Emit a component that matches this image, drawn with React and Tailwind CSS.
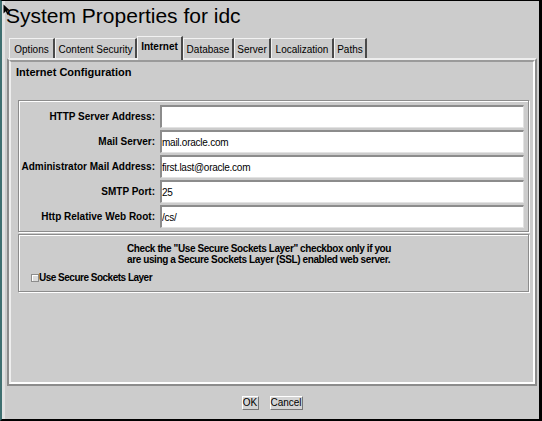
const tabs = [
  { label: 'Options', w: 'w-[46px]' },
  { label: 'Content Security', w: 'w-[82px]' },
  { label: 'Internet', w: 'w-[46px]', active: true },
  { label: 'Database', w: 'w-[51px]' },
  { label: 'Server', w: 'w-[37px]' },
  { label: 'Localization', w: 'w-[63px]' },
  { label: 'Paths', w: 'w-[33px]' },
]

const fields = [
  { label: 'HTTP Server Address:', value: '' },
  { label: 'Mail Server:', value: 'mail.oracle.com' },
  { label: 'Administrator Mail Address:', value: 'first.last@oracle.com' },
  { label: 'SMTP Port:', value: '25' },
  { label: 'Http Relative Web Root:', value: '/cs/' },
]

function Tab({ label, w, active }) {
  if (active) {
    return (
      <div
        className={`${w} relative z-10 -mb-[2px] flex h-[24px] items-start justify-center bg-[#cccccc] border-t border-l border-[#f2f2f2] border-r-2 border-r-[#4a4a4a] pt-[4px] text-[10px] font-bold leading-[12px]`}
      >
        {label}
      </div>
    )
  }
  return (
    <div
      className={`${w} flex h-[20px] items-center justify-center border-t border-l border-[#f2f2f2] border-r-2 border-r-[#4a4a4a] pt-[2px] text-[10px] leading-[12px]`}
    >
      {label}
    </div>
  )
}

function FieldRow({ label, value }) {
  return (
    <div className="flex h-[23px] items-center">
      <div className="mr-[5px] w-[136px] text-right text-[10px] font-bold leading-[12px] whitespace-nowrap">
        {label}
      </div>
      <input
        readOnly
        defaultValue={value}
        className="h-[23px] min-w-0 flex-1 bg-white border-t-2 border-l-2 border-[#8c8c8c] border-b border-r border-b-[#e2e2e2] border-r-[#e2e2e2] px-0 text-[10px] tracking-[-0.25px] outline-none"
      />
    </div>
  )
}

export default function App() {
  return (
    <div className="relative h-[421px] w-[542px] overflow-hidden bg-[#cccccc] border-t border-r-[3px] border-b-2 border-black border-l-2 border-l-[#3e6f70] font-['Liberation_Sans',Arial,sans-serif] text-black">
      <div className="flex h-full flex-col border-l-[3px] border-l-[#e2e2e2]">
        <div className="h-[35px] pl-[1px] pt-[2px] text-[21px] leading-[26px]">System Properties for idc</div>

        <div className="flex h-[22px] items-end pl-[4px]">
          {tabs.map(t => (
            <Tab key={t.label} {...t} />
          ))}
        </div>

        <div className="ml-[2px] mr-[2px] h-[328px] border-2 border-[#8c8c8c] border-t-[#eeeeee]">
          <div className="flex h-full flex-col border-2 border-t-[#9a9a9a] border-l-[#eeeeee] border-r-white border-b-white">
            <div className="pl-[5px] pt-[3px] text-[11px] font-bold leading-[14px]">Internet Configuration</div>

            <div className="ml-[7px] mr-[4px] mt-[21px] flex flex-col gap-[2px] border border-[#8c8c8c] pt-[4px] pb-[3px] pr-[4px] shadow-[inset_1px_1px_0_#ffffff,1px_1px_0_#ffffff]">
              {fields.map(f => (
                <FieldRow key={f.label} {...f} />
              ))}
            </div>

            <div className="ml-[7px] mr-[4px] mt-[2px] border border-[#8c8c8c] pt-[8px] pb-[7px] shadow-[inset_1px_1px_0_#ffffff,1px_1px_0_#ffffff]">
              <div className="pl-[108px] text-[10px] font-bold leading-[11px] tracking-[-0.4px] whitespace-nowrap">
                <div>Check the "Use Secure Sockets Layer" checkbox only if you</div>
                <div>are using a Secure Sockets Layer (SSL) enabled web server.</div>
              </div>
              <label className="mt-[7px] flex h-[12px] items-center pl-[12px] text-[10px] font-bold leading-[12px]">
                <span className="h-[8px] w-[8px] border border-[#8c8c8c] bg-[#dcdcdc] shadow-[inset_1px_1px_0_#ffffff]" />
                <span className="tracking-[-0.5px]">Use Secure Sockets Layer</span>
              </label>
            </div>
          </div>
        </div>

        <div className="flex flex-1 items-center justify-center gap-[11px]">
          <button className="flex h-[14px] w-[17px] items-center justify-center border border-t-white border-l-white border-r-[#777777] border-b-[#777777] bg-[#d4d4d4] text-[10px] leading-[12px]">
            OK
          </button>
          <button className="flex h-[14px] w-[33px] items-center justify-center border border-t-white border-l-white border-r-[#777777] border-b-[#777777] bg-[#d4d4d4] text-[10px] leading-[12px]">
            Cancel
          </button>
        </div>
      </div>

      <svg className="absolute left-[1px] top-[3px]" width="8" height="12" viewBox="0 0 8 12">
        <path d="M0.5 0.5 V9.5 L2.8 7.3 L4.3 10.8 L5.7 10.1 L4.2 6.8 H7.2 Z" fill="#000000" />
      </svg>
    </div>
  )
}
